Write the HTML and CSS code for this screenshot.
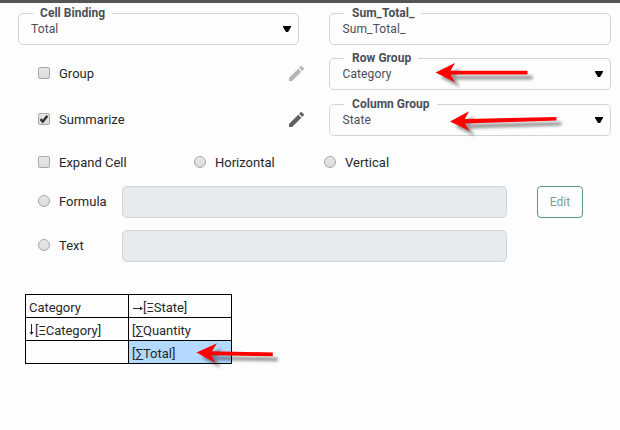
FILE: index.html
```html
<!DOCTYPE html>
<html lang="en">
<head>
<meta charset="utf-8">
<title>Cell Binding</title>
<link rel="stylesheet" href="styles.css">
</head>
<body>
<main class="pane">
  <div class="line first">
    <div class="field left"><span class="legend">Cell Binding</span><span class="value">Total</span><svg class="caret" viewBox="0 0 8 6"><path d="M0 0h8v1L5 6H3L0 1z"/></svg></div>
    <div class="field right-field"><span class="legend">Sum_Total_</span><span class="value">Sum_Total_</span></div>
  </div>
  <div class="line group">
    <div class="option wide"><i class="box"></i><span class="name">Group</span>
      <svg class="pencil faded" viewBox="3 3 18 18"><path d="M3 17.25V21h3.75L17.81 9.94l-3.75-3.75zM20.71 7.04a1 1 0 0 0 0-1.41l-2.34-2.34a1 1 0 0 0-1.41 0l-1.83 1.83 3.75 3.75z"/></svg></div>
    <div class="field right-field"><span class="legend">Row Group</span><span class="value">Category</span><svg class="caret" viewBox="0 0 8 6"><path d="M0 0h8v1L5 6H3L0 1z"/></svg></div>
  </div>
  <div class="line summarize">
    <div class="option wide"><i class="box"><svg class="check" viewBox="0 0 12 12"><path d="M2.5 6.2 4.8 8.6 9.4 2.8"/></svg></i><span class="name">Summarize</span>
      <svg class="pencil" viewBox="3 3 18 18"><path d="M3 17.25V21h3.75L17.81 9.94l-3.75-3.75zM20.71 7.04a1 1 0 0 0 0-1.41l-2.34-2.34a1 1 0 0 0-1.41 0l-1.83 1.83 3.75 3.75z"/></svg></div>
    <div class="field right-field"><span class="legend">Column Group</span><span class="value">State</span><svg class="caret" viewBox="0 0 8 6"><path d="M0 0h8v1L5 6H3L0 1z"/></svg></div>
  </div>
  <div class="expand">
    <div class="option"><i class="box"></i><span class="name">Expand Cell</span></div>
    <div class="option"><i class="box round"></i><span class="name">Horizontal</span></div>
    <div class="option"><i class="box round"></i><span class="name">Vertical</span></div>
  </div>
  <div class="entry">
    <div class="option"><i class="box round"></i><span class="name">Formula</span></div>
    <div class="input"></div>
    <button class="edit">Edit</button>
  </div>
  <div class="entry">
    <div class="option"><i class="box round"></i><span class="name">Text</span></div>
    <div class="input"></div>
  </div>
  <div class="sheet">
    <div class="cell">Category</div><div class="cell"><svg class="glyph right" viewBox="0 0 10 8"><path d="M0 4.5h8"/><path class="tip" d="M7 2.5 10 4.5 7 6.5z"/></svg>[ΞState]</div>
    <div class="cell"><svg class="glyph down" viewBox="0 0 6 11"><path d="M2.5 0v9"/><path class="tip" d="M.5 8h4L2.5 11z"/></svg>[ΞCategory]</div><div class="cell">[∑Quantity</div>
    <div class="cell"></div><div class="cell selected">[∑Total]</div>
  </div>
</main>
<svg class="arrows" viewBox="0 0 620 430">
  <path d="M435.5 72.5 455 63 450.5 70.8H527.5V74.4H450.5L455 82.3z"/>
  <path d="M450 121.5 469 111.3 464.8 119.1 556.5 116.9V120.6L465 123.4 469.7 131z"/>
  <path d="M196.5 352.5 217 343.3 212 351.2 272.8 352.5V356.3L211.5 355.2 215.5 363z"/>
</svg>
</body>
</html>
```
FILE: styles.css
```css
* { box-sizing: border-box; }
body { margin: 0; background: #fdfdfd; font-family: Roboto, "Liberation Sans", sans-serif; color: #25282b; }
.pane { height: 430px; border-top: 3px solid #555; padding: 10px 9px 0 18px; }
.line { display: grid; grid-template-columns: 281px 282px; column-gap: 30px; height: 32px; }
.group { margin-top: 13px; }
.summarize { margin-top: 14px; }
.field { position: relative; display: flex; align-items: center; justify-content: space-between; border: 1px solid #ced4da; border-radius: 5px; padding: 0 7px 0 12px; }
.legend { position: absolute; left: 14px; top: -9px; padding: 0 7px; background: #fdfdfd; font-size: 12px; line-height: 16px; font-weight: 700; letter-spacing: .03px; color: #495057; white-space: nowrap; }
.right-field .legend { padding-left: 8px; }
.value { font-size: 12px; line-height: 16px; letter-spacing: .12px; color: #495057; }
.right-field .value { margin-left: .5px; }
.caret { width: 8px; height: 6px; fill: #000; }
.option { display: flex; align-items: center; }
.wide { padding-left: 20px; margin-top: -2px; }
.box { flex: none; width: 12px; height: 12px; border: 1px solid #a6aaaa; border-radius: 2px; background: linear-gradient(#e6e8e8, #dadddc); }
.round { border-radius: 50%; }
.check { display: block; width: 12px; height: 12px; margin: -1px; fill: none; stroke: #333; stroke-width: 2.4; }
.name { margin: 2px 0 0 9px; font-size: 13px; line-height: 18px; white-space: nowrap; }
.pencil { width: 15px; height: 15px; margin: 0 -5px 0 auto; fill: #606060; }
.faded { fill: #b5b5b5; }
.expand { display: grid; grid-template-columns: 156px 130px 1fr; grid-template-rows: 18px; margin: 17px 0 0 20px; height: 18px; }
.entry { display: grid; grid-template-columns: 84px 385px 46px; height: 32px; margin: 15px 0 0 20px; }
.entry + .entry { margin-top: 12px; }
.entry .option { margin-top: -2px; }
.input { background: #e8ebed; border: 1px solid #ced4da; border-radius: 5px; }
.edit { margin-left: 30px; width: 46px; padding: 0; border: 1px solid #5e9490; border-radius: 4px; background: #fdfdfd; color: #76a3a0; font: 12px/16px Roboto, sans-serif; }
.sheet { display: grid; grid-template-columns: 103px 103px; grid-auto-rows: 23px; width: 207px; margin: 32px 0 0 7px; border: solid #000; border-width: 1px 0 0 1px; }
.cell { border: solid #000; border-width: 0 1px 1px 0; padding: 4px 3px 0; font-size: 13px; line-height: 18px; letter-spacing: -.03px; white-space: nowrap; }
.selected { background: #b3d9ff; }
.glyph { fill: none; stroke: #25282b; stroke-width: 1; }
.right { width: 10px; height: 8px; margin: 0 0 0 1px; }
.down { width: 6px; height: 11px; }
.tip { fill: #25282b; stroke: none; }
.arrows { position: absolute; left: 0; top: 0; width: 620px; height: 430px; fill: #f00; pointer-events: none; filter: drop-shadow(5px 5px 1.5px rgba(0, 0, 0, .4)); }
```
